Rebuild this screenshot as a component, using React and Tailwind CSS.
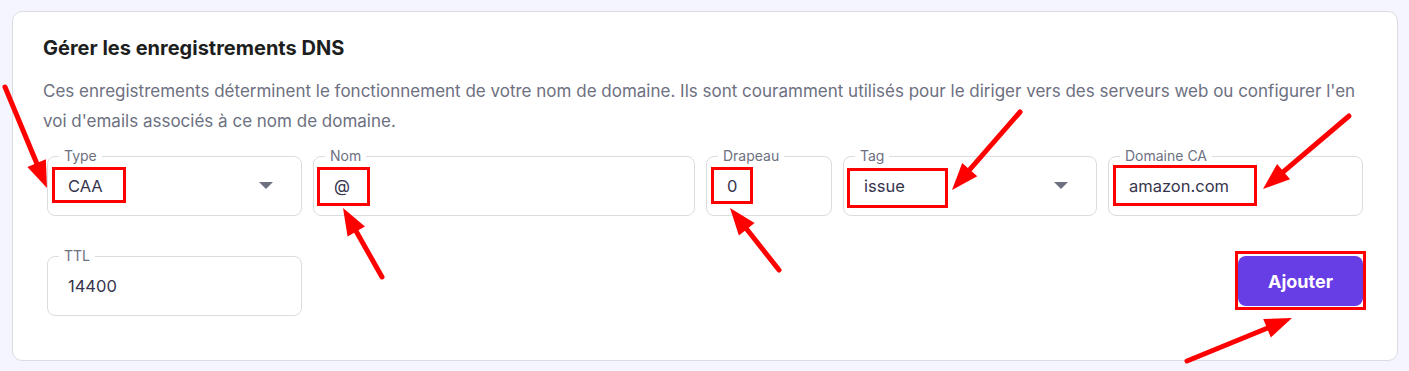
import React from "react";

function Caret() {
  return (
    <svg width="14" height="8" viewBox="0 0 14 8" className="shrink-0">
      <path d="M0 0 L14 0 L7 7 Z" fill="#6d7081" />
    </svg>
  );
}

function Field({ label, value, width, select }) {
  return (
    <div
      className="relative h-[60px] rounded-lg border border-[#dadce0] bg-white flex items-center pl-[20px] pr-[28px] shrink-0"
      style={{ width }}
    >
      <span className="absolute left-[11px] top-[-10px] bg-white px-[5px] text-[14px] leading-[18px] text-[#6d7081]">
        {label}
      </span>
      <span className="flex-1 text-[16.5px] text-[#36344d]">{value}</span>
      {select && <Caret />}
    </div>
  );
}

const arrows = [
  [5, 87, 47, 188],
  [382, 277, 343, 208],
  [779, 270, 730, 208],
  [1020, 112, 952, 190],
  [1349, 116, 1263, 189],
  [1187, 361, 1292, 318],
];

const boxes = [
  [52, 167, 74, 36],
  [317, 167, 53, 39],
  [711, 167, 42, 37],
  [847, 168, 101, 40],
  [1113, 165, 144, 41],
  [1235, 251, 131, 59],
];

function Arrow({ s }) {
  const [x1, y1, x2, y2] = s;
  const dx = x2 - x1;
  const dy = y2 - y1;
  const len = Math.hypot(dx, dy);
  const ux = dx / len;
  const uy = dy / len;
  const hl = 27;
  const hw = 10;
  const bx = x2 - ux * hl;
  const by = y2 - uy * hl;
  const px = -uy;
  const py = ux;
  const pts = `${x2},${y2} ${bx + px * hw},${by + py * hw} ${bx - px * hw},${by - py * hw}`;
  return (
    <g>
      <line x1={x1} y1={y1} x2={bx + ux * 4} y2={by + uy * 4} stroke="#ff0000" strokeWidth="5" strokeLinecap="round" />
      <polygon points={pts} fill="#ff0000" />
    </g>
  );
}

export default function App() {
  return (
    <div
      className="relative w-[1409px] h-[371px] bg-[#f4f5ff] pt-[11px] pl-[12px] pr-[11px] overflow-hidden"
      style={{ fontFamily: "Inter, 'Noto Sans', sans-serif" }}
    >
      <div className="h-[350px] rounded-[10px] border border-[#dadce0] bg-white px-[30px] pt-[23px]">
        <h2 className="text-[20px] leading-[26px] font-bold text-[#1d1e20]">
          Gérer les enregistrements DNS
        </h2>
        <div className="mt-[15px] text-[17px] leading-[30px] text-[#6d7081] whitespace-nowrap">
          <div>
            Ces enregistrements déterminent le fonctionnement de votre nom de domaine. Ils sont couramment utilisés pour le diriger vers des serveurs web ou configurer l'en
          </div>
          <div>voi d'emails associés à ce nom de domaine.</div>
        </div>
        <div className="px-[4px] mt-[20px]">
          <div className="flex gap-[11px]">
            <Field label="Type" value="CAA" width={255} select />
            <Field label="Nom" value="@" width={382} />
            <Field label="Drapeau" value="0" width={126} />
            <Field label="Tag" value="issue" width={254} select />
            <Field label="Domaine CA" value="amazon.com" width={255} />
          </div>
          <div className="flex justify-between items-start mt-[40px]">
            <Field label="TTL" value="14400" width={255} />
            <button className="w-[125px] h-[50px] rounded-lg bg-[#673de6] text-white font-bold text-[18px]">
              Ajouter
            </button>
          </div>
        </div>
      </div>
      <svg className="absolute inset-0 pointer-events-none" width="1409" height="371">
        {boxes.map(([x, y, w, h], i) => (
          <rect key={i} x={x + 1.5} y={y + 1.5} width={w - 3} height={h - 3} fill="none" stroke="#ff0000" strokeWidth="3" />
        ))}
        {arrows.map((s, i) => (
          <Arrow key={i} s={s} />
        ))}
      </svg>
    </div>
  );
}
